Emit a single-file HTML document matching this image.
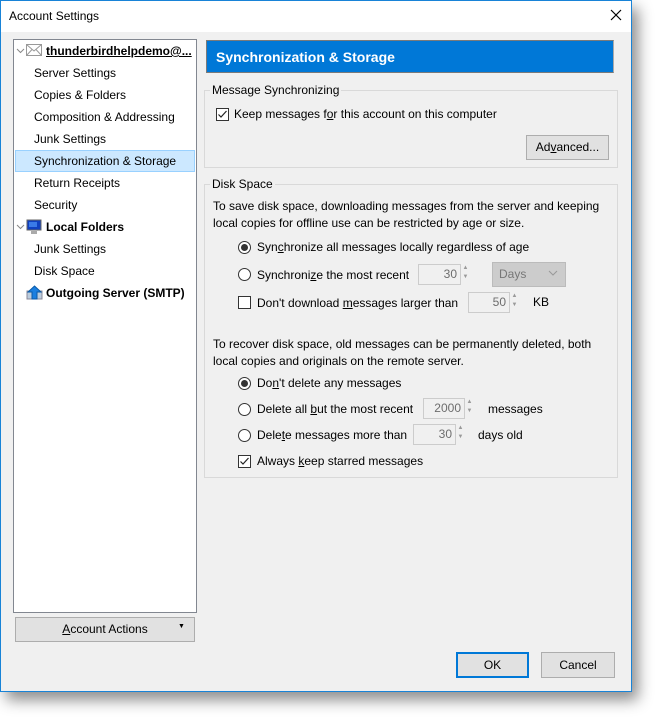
<!DOCTYPE html>
<html><head><meta charset="utf-8"><style>
*{box-sizing:border-box;margin:0;padding:0}
body{width:659px;height:719px;background:#fff;position:relative;overflow:hidden;font-family:"Liberation Sans",sans-serif;font-size:12px;color:#000}
.a{position:absolute}
.t{position:absolute;line-height:14px;white-space:nowrap}
.win{left:0;top:0;width:632px;height:692px;background:#f0f0f0;border:1px solid #1883d7;box-shadow:6px 8px 14px rgba(0,0,0,.45)}
.tb{left:1px;top:1px;width:630px;height:31px;background:#fff}
.fs{position:absolute;border:1px solid #d9d9d9}
.lg{position:absolute;background:#f0f0f0;padding:0 2px;line-height:14px}
.cb{position:absolute;width:13px;height:13px;border:1px solid #333;background:#fff}
.rb{position:absolute;width:13px;height:13px;border:1px solid #333;border-radius:50%;background:#fff}
.rb.on::after{content:"";position:absolute;left:2px;top:2px;width:7px;height:7px;border-radius:50%;background:#333}
.inp{position:absolute;border:1px solid #ccc;background:#f0f0f0;color:#6d6d6d;text-align:right;padding-right:3px;line-height:19px}
.sp{position:absolute;width:9px;font-size:6px;color:#999;line-height:9px;text-align:center}
.btn{position:absolute;background:#e1e1e1;border:1px solid #adadad;text-align:center}
u{text-decoration:underline}
</style></head><body>
<div class="a win"></div>
<div class="a tb"></div>
<div class="t" style="left:9px;top:9px">Account Settings</div>
<svg class="a" style="left:610px;top:9px" width="12" height="12"><path d="M1 1L11 11M11 1L1 11" stroke="#000" stroke-width="1.2"/></svg>

<div class="a" style="left:13px;top:39px;width:184px;height:574px;background:#fff;border:1px solid #828790"></div>
<div class="a" style="left:15px;top:150px;width:180px;height:22px;background:#cce8ff;border:1px solid #99d1ff"></div>
<svg class="a" style="left:16px;top:47px" width="10" height="8"><path d="M1 2L4.5 5.5L8 2" stroke="#888" fill="none"/></svg>
<svg class="a" style="left:26px;top:44px" width="16" height="12"><rect x="0.5" y="0.5" width="15" height="11" fill="#fff" stroke="#999"/><path d="M0.5 0.5L8 7L15.5 0.5M0.5 11.5L6 5.5M15.5 11.5L10 5.5" stroke="#999" fill="none"/></svg>
<div class="t" style="left:46px;top:44px;font-weight:bold;text-decoration:underline">thunderbirdhelpdemo@...</div>
<div class="t" style="left:34px;top:66px">Server Settings</div>
<div class="t" style="left:34px;top:88px">Copies &amp; Folders</div>
<div class="t" style="left:34px;top:110px">Composition &amp; Addressing</div>
<div class="t" style="left:34px;top:132px">Junk Settings</div>
<div class="t" style="left:34px;top:154px">Synchronization &amp; Storage</div>
<div class="t" style="left:34px;top:176px">Return Receipts</div>
<div class="t" style="left:34px;top:198px">Security</div>
<svg class="a" style="left:16px;top:223px" width="10" height="8"><path d="M1 2L4.5 5.5L8 2" stroke="#888" fill="none"/></svg>
<svg class="a" style="left:26px;top:219px" width="16" height="16"><rect x="1" y="1" width="14" height="10" fill="#1040c0" stroke="#666"/><rect x="3" y="3" width="8" height="5" fill="#3a7ae8"/><rect x="5" y="12" width="6" height="3" fill="#aaa"/></svg>
<div class="t" style="left:46px;top:220px;font-weight:bold">Local Folders</div>
<div class="t" style="left:34px;top:242px">Junk Settings</div>
<div class="t" style="left:34px;top:264px">Disk Space</div>
<svg class="a" style="left:26px;top:285px" width="17" height="15"><rect x="1" y="6" width="15" height="8" fill="#bcd" stroke="#889"/><path d="M8.5 1L15 7H11V14H6V7H2Z" fill="#1a7fe0" stroke="#0a5aa8"/></svg>
<div class="t" style="left:46px;top:286px;font-weight:bold">Outgoing Server (SMTP)</div>

<div class="btn" style="left:15px;top:617px;width:180px;height:25px;line-height:23px"><u>A</u>ccount Actions</div>
<div class="t" style="left:178px;top:620px;font-size:7px">▼</div>

<div class="a" style="left:206px;top:40px;width:408px;height:33px;background:#0078d7;border:1px solid #7a7a7a;border-right-color:#aaa"></div>
<div class="t" style="left:216px;top:50px;color:#fff;font-weight:bold;font-size:14px">Synchronization &amp; Storage</div>

<div class="fs" style="left:204px;top:90px;width:414px;height:78px"></div>
<div class="lg" style="left:210px;top:83px">Message Synchronizing</div>
<div class="cb" style="left:216px;top:108px"></div><svg class="a" style="left:217px;top:109px" width="11" height="11"><path d="M1.5 5.5L4 8L9.5 2" stroke="#222" fill="none" stroke-width="1.2"/></svg>
<div class="t" style="left:234px;top:107px">Keep messages f<u>o</u>r this account on this computer</div>
<div class="btn" style="left:526px;top:135px;width:83px;height:25px;line-height:23px">Ad<u>v</u>anced...</div>

<div class="fs" style="left:204px;top:184px;width:414px;height:294px"></div>
<div class="lg" style="left:210px;top:177px">Disk Space</div>
<div class="t" style="left:213px;top:198px;line-height:17px">To save disk space, downloading messages from the server and keeping<br>local copies for offline use can be restricted by age or size.</div>
<div class="rb on" style="left:238px;top:241px"></div>
<div class="t" style="left:257px;top:240px">Syn<u>c</u>hronize all messages locally regardless of age</div>
<div class="rb" style="left:238px;top:268px"></div>
<div class="t" style="left:257px;top:268px">Synchroni<u>z</u>e the most recent</div>
<div class="inp" style="left:418px;top:264px;width:43px;height:21px">30</div>
<div class="sp" style="left:461px;top:264px">▲<br>▼</div>
<div class="a" style="left:492px;top:262px;width:74px;height:25px;background:#ccc;border:1px solid #bbb;color:#777;padding-left:6px;line-height:23px">Days</div>
<svg class="a" style="left:548px;top:270px" width="10" height="7"><path d="M1 1L5 5L9 1" stroke="#999" fill="none"/></svg>
<div class="cb" style="left:238px;top:296px"></div>
<div class="t" style="left:257px;top:296px">Don't download <u>m</u>essages larger than</div>
<div class="inp" style="left:468px;top:292px;width:42px;height:21px">50</div>
<div class="sp" style="left:510px;top:292px">▲<br>▼</div>
<div class="t" style="left:533px;top:295px">KB</div>

<div class="t" style="left:213px;top:336px;line-height:17px">To recover disk space, old messages can be permanently deleted, both<br>local copies and originals on the remote server.</div>
<div class="rb on" style="left:238px;top:377px"></div>
<div class="t" style="left:257px;top:376px">Do<u>n</u>'t delete any messages</div>
<div class="rb" style="left:238px;top:403px"></div>
<div class="t" style="left:257px;top:402px">Delete all <u>b</u>ut the most recent</div>
<div class="inp" style="left:423px;top:398px;width:42px;height:21px">2000</div>
<div class="sp" style="left:465px;top:398px">▲<br>▼</div>
<div class="t" style="left:488px;top:402px">messages</div>
<div class="rb" style="left:238px;top:429px"></div>
<div class="t" style="left:257px;top:428px">Dele<u>t</u>e messages more than</div>
<div class="inp" style="left:413px;top:424px;width:43px;height:21px">30</div>
<div class="sp" style="left:456px;top:424px">▲<br>▼</div>
<div class="t" style="left:478px;top:428px">days old</div>
<div class="cb" style="left:238px;top:455px"></div><svg class="a" style="left:239px;top:456px" width="11" height="11"><path d="M1.5 5.5L4 8L9.5 2" stroke="#222" fill="none" stroke-width="1.2"/></svg>
<div class="t" style="left:257px;top:454px">Always <u>k</u>eep starred messages</div>

<div class="btn" style="left:456px;top:652px;width:73px;height:26px;line-height:22px;border:2px solid #0078d7">OK</div>
<div class="btn" style="left:541px;top:652px;width:74px;height:26px;line-height:24px">Cancel</div>
</body></html>
